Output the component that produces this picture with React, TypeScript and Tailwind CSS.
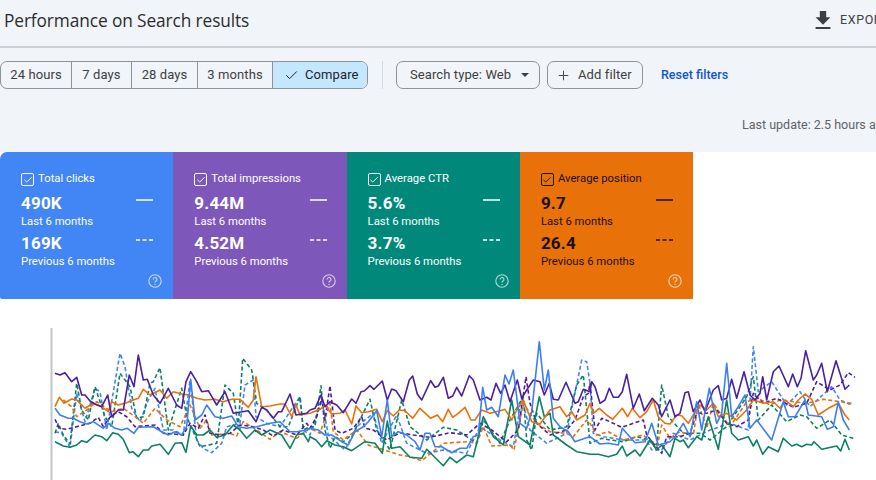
import React from "react";
import { Check, Plus } from "lucide-react";

type P = number[];
const toPoints = (a: P, b: P, c: P) => {
  const out: string[] = [];
  const add = (arr: P, dx: number, maxX = Infinity) => {
    for (let i = 0; i + 1 < arr.length; i += 2) {
      if (arr[i] <= maxX) out.push(`${(dx + arr[i] / 3).toFixed(1)},${(320 + arr[i + 1] / 3).toFixed(1)}`);
    }
  };
  add(a, 40, 805);
  add(b, 310, 835);
  add(c, 590);
  return out.join(" ");
};

const series: { color: string; dash?: string; a: P; b: P; c: P }[] = [
  { color: "#4285f4", dash: "4 2.5",
    a: [45,335,65,340,90,382,110,220,135,305,165,205,180,215,200,330,240,100,255,140,275,265,300,305,325,240,345,205,370,330,400,330,430,345,450,180,470,360,490,385,515,398,545,370,560,320,600,310,615,195,640,180,648,290,680,310,720,320,780,230,790,330],
    b: [0,345,35,240,55,345,105,390,140,320,190,280,215,370,260,285,290,370,350,400,400,390,470,400,510,320,570,360,610,380,635,235,660,330,710,370,770,340,815,120,830,125],
    c: [0,190,10,340,40,350,100,360,170,360,185,390,215,390,250,340,300,360,360,330,420,310,475,330,490,80,505,215,545,185,590,255,630,215,660,260,725,200,750,240,785,255] },
  { color: "#0d7f66", dash: "4 2.5",
    a: [45,340,55,310,70,345,90,372,110,190,125,270,145,300,165,200,195,290,215,320,240,160,270,200,290,295,310,290,330,190,340,185,360,143,385,330,425,205,440,290,480,380,530,370,555,195,580,220,595,320,608,115,635,150,650,250,680,270,720,320,745,320,780,230,790,330],
    b: [0,320,15,320,33,197,45,330,60,385,75,350,100,365,130,340,180,238,200,330,240,390,275,240,300,320,350,360,400,322,440,330,500,370,520,300,570,370,600,300,640,230,650,360,665,390,680,280,720,330,770,320,800,195,820,165],
    c: [0,370,35,355,60,360,100,365,140,350,180,360,200,375,215,195,235,290,280,340,330,340,360,360,410,320,470,230,490,170,505,300,545,255,590,305,630,285,650,290,680,325,720,300,755,345,790,355] },
  { color: "#e8710a", dash: "4 2.5",
    a: [70,240,95,260,110,290,140,270,170,245,215,275,250,265,285,290,310,310,345,265,380,300,420,320,450,255,480,325,500,300,515,345,570,340,590,348,610,305,650,330,690,358,720,335,770,355],
    b: [0,325,30,340,60,250,70,335,100,360,140,330,175,375,230,392,270,405,300,410,335,422,400,370,470,365,500,370,520,320,545,378,600,375,612,390,640,250,680,310,720,335,770,340,790,350,830,300],
    c: [0,310,20,345,55,335,100,360,160,345,200,385,215,315,240,355,270,335,310,345,325,250,350,325,370,250,420,320,470,245,505,235,540,255,570,240,650,250,700,238,785,250] },
  { color: "#4a1fa3", dash: "4 2.5",
    a: [45,298,58,325,80,328,110,320,150,310,175,292,190,320,215,285,235,275,260,290,285,320,310,318,345,315,370,340,400,342,430,345,450,310,475,325,495,285,510,340,540,345,570,340,600,315,640,320,670,330,700,348,730,330,770,345,800,310],
    b: [0,325,20,290,35,235,45,300,60,197,75,330,95,340,130,325,155,290,165,325,190,330,230,360,270,338,310,345,360,352,420,338,470,345,510,310,545,330,590,365,625,330,648,170,660,250,680,310,720,345,770,330,795,300,820,230,835,220],
    c: [0,190,15,330,35,295,60,305,95,322,130,310,160,300,170,345,190,370,215,400,230,350,270,350,300,340,320,280,350,280,380,270,410,310,440,320,475,300,490,220,520,250,560,235,610,262,650,250,680,185,720,210,750,195,775,158,795,172] },
  { color: "#0d7f66",
    a: [45,365,70,378,90,382,110,375,125,362,140,367,165,345,185,350,200,362,218,338,235,343,250,358,268,398,278,395,295,410,310,390,325,390,335,378,360,373,385,403,405,370,425,368,438,397,452,318,470,345,490,345,510,330,530,352,555,345,580,315,600,330,620,355,645,330,665,345,690,330,725,345,750,385,770,345,790,340,805,365],
    b: [0,350,18,360,35,380,50,362,75,375,100,380,125,392,165,365,195,370,217,400,232,303,245,385,270,380,300,412,335,415,350,388,400,437,420,412,440,428,470,405,490,410,520,290,550,350,580,375,605,240,625,350,660,375,688,230,703,290,720,280,730,345,770,375,800,395,825,400],
    c: [0,403,25,403,55,410,80,403,97,378,110,408,135,390,150,408,180,360,200,390,215,375,240,410,255,355,270,365,280,360,295,383,320,350,335,360,355,290,385,388,410,240,425,340,445,360,475,350,490,378,500,360,518,403,535,380,565,395,580,355,605,378,620,373,635,380,650,373,665,375,672,365,695,388,740,378,752,393,765,358,778,390] },
  { color: "#e8710a",
    a: [45,260,58,232,72,250,95,237,110,240,135,265,160,250,185,260,205,275,215,245,235,255,260,248,280,240,295,235,310,208,330,225,360,210,380,235,400,215,425,222,445,225,470,235,495,240,525,238,550,245,575,238,600,238,625,262,640,240,648,170,665,260,690,258,720,252,735,252,755,290,768,255,780,285],
    b: [0,280,30,268,45,255,65,282,90,280,105,270,125,312,138,258,155,278,175,275,200,268,217,305,232,272,250,288,268,270,285,272,308,295,330,265,362,295,382,285,398,305,415,268,428,292,445,280,465,262,483,300,495,300,515,270,540,280,570,272,585,268,605,300,620,270,640,240,665,305,690,312,720,270,750,260,770,290,785,275,800,300,825,285],
    c: [0,250,10,280,28,265,50,285,68,298,97,265,113,290,127,265,150,293,170,275,190,240,205,290,225,310,240,312,260,285,275,287,295,310,310,285,330,255,350,270,370,250,385,290,410,280,440,300,470,270,490,240,520,250,550,245,570,265,585,240,610,260,625,240,645,222,665,238,685,285,715,265,745,250,765,285,778,300] },
  { color: "#4a1fa3",
    a: [45,160,60,165,75,158,95,185,110,172,125,225,135,225,150,243,165,252,185,260,203,225,215,290,235,270,250,270,268,165,282,200,295,105,310,180,322,178,340,225,360,250,385,205,410,255,425,265,438,185,452,155,470,185,485,215,505,212,530,255,555,215,580,280,625,272,648,305,665,262,680,270,700,295,715,275,725,275,750,222,768,285,800,280],
    b: [0,270,15,265,33,225,45,260,60,245,80,255,100,278,125,237,138,250,153,215,163,213,180,197,192,208,217,183,232,240,245,207,258,212,280,245,298,180,308,168,322,222,335,240,362,182,375,202,385,198,400,172,415,235,428,228,440,202,455,228,478,167,490,180,510,240,530,232,543,240,558,190,572,220,585,195,600,245,622,180,635,235,650,210,670,180,690,185,703,225,718,190,730,238,745,240,768,187,795,250,805,245,820,208],
    c: [0,215,5,185,15,200,30,250,45,240,58,205,70,232,85,232,97,215,110,163,130,265,148,222,163,272,187,235,205,255,215,290,240,240,255,290,270,280,285,218,295,215,310,275,330,240,345,275,370,210,385,197,395,240,410,235,425,178,440,235,462,155,480,225,495,240,510,220,518,170,530,240,550,155,567,138,595,200,608,162,622,200,633,175,647,92,670,180,680,165,695,130,712,215,738,122,765,208,778,195] },
  { color: "#3b7ff0",
    a: [45,265,60,285,85,295,100,295,120,305,140,312,160,305,190,325,205,310,225,325,245,330,262,325,282,340,295,322,340,320,365,335,385,345,405,335,425,345,440,320,452,178,465,300,485,285,500,255,525,290,550,295,575,288,595,320,620,325,650,320,690,310,720,305,750,335,770,335,800,330],
    b: [0,325,25,330,45,345,65,345,95,365,115,375,135,335,160,320,175,305,200,272,215,350,232,240,245,350,265,335,290,345,315,365,330,390,345,340,360,340,375,380,395,380,425,398,450,385,470,385,490,350,505,345,518,202,530,270,545,262,565,290,585,165,597,192,610,150,630,310,650,325,665,275,688,65,703,210,715,150,730,295,750,320,775,335,795,365,825,355],
    c: [0,350,30,372,55,370,85,375,97,325,135,368,165,365,185,310,205,375,240,365,255,350,280,310,300,350,320,245,335,330,358,205,380,310,395,280,410,130,425,290,445,260,465,225,480,325,500,300,545,360,580,245,595,290,615,290,645,240,655,285,695,290,712,328,730,320,745,245,760,300,778,330] },
];

const HelpIcon = () => (
  <svg width="14" height="14" viewBox="0 0 14 14" fill="none" stroke="currentColor" className="opacity-70">
    <circle cx="7" cy="7" r="6.2" strokeWidth="1.1" />
    <path d="M5.1 5.5a1.9 1.9 0 1 1 2.9 1.6c-.7.4-1 .8-1 1.5" strokeWidth="1.1" />
    <circle cx="7" cy="10.4" r=".7" fill="currentColor" stroke="none" />
  </svg>
);

const Box = ({ dark }: { dark?: boolean }) => (
  <span className={`w-[13px] h-[13px] rounded-[2px] border-[1.5px] flex items-center justify-center ${dark ? "border-[#1b1006]" : "border-white"}`}>
    <Check size={10} strokeWidth={2.2} />
  </span>
);

const Metric = ({ value, label, dashed }: { value: string; label: string; dashed?: boolean }) => (
  <div className="flex justify-between pr-[20px] h-[40px]">
    <div>
      <div className="text-[17px] leading-[20px] font-bold tracking-[0.2px]">{value}</div>
      <div className="text-[11.3px] leading-[16px] mt-[1px]">{label}</div>
    </div>
    <svg width="17" height="4" className="mt-[5px]">
      <line x1="0" x2="17" y1="2" y2="2" stroke="currentColor" strokeWidth="1.5" strokeDasharray={dashed ? "4 2.5" : undefined} />
    </svg>
  </div>
);

const Card = ({ title, v1, v2, bg, dark, rounded }: { title: string; v1: string; v2: string; bg: string; dark?: boolean; rounded?: boolean }) => (
  <div className={`${bg} ${dark ? "text-[#1b1006]" : "text-white"} ${rounded ? "rounded-tl-[7px] rounded-bl-[2px]" : ""} w-[173.3px] h-[147px] pl-[21px] pt-[20px] font-['Roboto',sans-serif] relative`}>
    <div className="flex items-center gap-[4px] h-[15px] text-[11.3px]">
      <Box dark={dark} />
      <span>{title}</span>
    </div>
    <div className="mt-[6px]">
      <Metric value={v1} label="Last 6 months" />
    </div>
    <Metric value={v2} label="Previous 6 months" dashed />
    <div className={`absolute right-[11px] bottom-[11px] ${dark ? "text-white" : ""}`}>
      <HelpIcon />
    </div>
  </div>
);

const Seg = ({ children, w, last }: { children: React.ReactNode; w: string; last?: boolean }) => (
  <div className={`${w} h-full flex items-center justify-center ${last ? "" : "border-r border-[#8f9396]"}`}>{children}</div>
);

export default function App() {
  return (
    <div className="w-[876px] h-[480px] overflow-hidden bg-[#f1f4f8] flex flex-col text-[#202124] font-['Roboto',sans-serif]">
      <header className="h-[48px] shrink-0 flex items-center border-b-2 border-[#ccd0d4] pl-[4px]">
        <h1 className="text-[17.3px] font-['Open_Sans',sans-serif] text-[#2a2c2f] tracking-[-0.1px] -mt-[5px] whitespace-nowrap">Performance on Search results</h1>
        <div className="flex-1" />
        <div className="w-[61px] shrink-0 flex items-center gap-[9px] -mt-[6px] text-[12.5px] tracking-[0.6px] whitespace-nowrap">
          <svg width="16" height="18" viewBox="5 3 14 17" className="shrink-0" fill="#3c4043"><path d="M19 9h-4V3H9v6H5l7 7 7-7zM5 18v2h14v-2H5z" /></svg>
          <span className="text-[#3c4043]">EXPORT</span>
        </div>
      </header>

      <div className="h-[28px] mt-[13px] shrink-0 flex items-center text-[13px] text-[#3c4043] tracking-[0.1px]">
        <div className="h-full w-[368px] flex border border-[#8f9396] rounded-[7px] overflow-hidden">
          <Seg w="w-[71px]">24 hours</Seg>
          <Seg w="w-[60px]">7 days</Seg>
          <Seg w="w-[66px]">28 days</Seg>
          <Seg w="w-[75px]">3 months</Seg>
          <div className="flex-1 h-full bg-[#c2e7ff] flex items-center pl-[11px] gap-[6px] text-[#1f2328]">
            <Check size={15} strokeWidth={1.6} />
            <span>Compare</span>
          </div>
        </div>
        <div className="w-[1px] h-full bg-[#d5d8dc] ml-[14px]" />
        <div className="ml-[13px] w-[144px] h-full border border-[#8f9396] rounded-[7px] flex items-center pl-[13px] text-[#3c4043]">
          <span>Search type: Web</span>
          <svg width="8" height="4" viewBox="0 0 8 4" className="ml-[10px]"><path d="M0 0h8L4 4z" fill="#3c4043" /></svg>
        </div>
        <div className="ml-[7px] w-[96px] h-full border border-[#8f9396] rounded-[7px] flex items-center pl-[8px] gap-[7px]">
          <Plus size={15} strokeWidth={1.5} />
          <span>Add filter</span>
        </div>
        <a className="ml-[18px] text-[#0b57d0] font-medium text-[12.5px] tracking-normal">Reset filters</a>
      </div>

      <div className="h-[63px] shrink-0 pl-[742px] pt-[28px] text-[12.5px] leading-[16px] text-[#5f6368] whitespace-nowrap">Last update: 2.5 hours ago</div>

      <div className="flex-1 bg-white flex flex-col">
        <div className="flex shrink-0">
          <Card rounded bg="bg-[#4285f4]" title="Total clicks" v1="490K" v2="169K" />
          <Card bg="bg-[#7e57bb]" title="Total impressions" v1="9.44M" v2="4.52M" />
          <Card bg="bg-[#00897b]" title="Average CTR" v1="5.6%" v2="3.7%" />
          <Card dark bg="bg-[#e8710a]" title="Average position" v1="9.7" v2="26.4" />
        </div>
        <svg width="876" height="181" viewBox="0 299 876 181" className="block" fill="none">
          <rect x="50.5" y="328" width="2" height="152" fill="#c4c4c4" />
          {series.map((s, i) => (
            <polyline key={i} points={toPoints(s.a, s.b, s.c)} stroke={s.color} strokeWidth="1.6" strokeLinejoin="round" strokeDasharray={s.dash} />
          ))}
        </svg>
      </div>
    </div>
  );
}
